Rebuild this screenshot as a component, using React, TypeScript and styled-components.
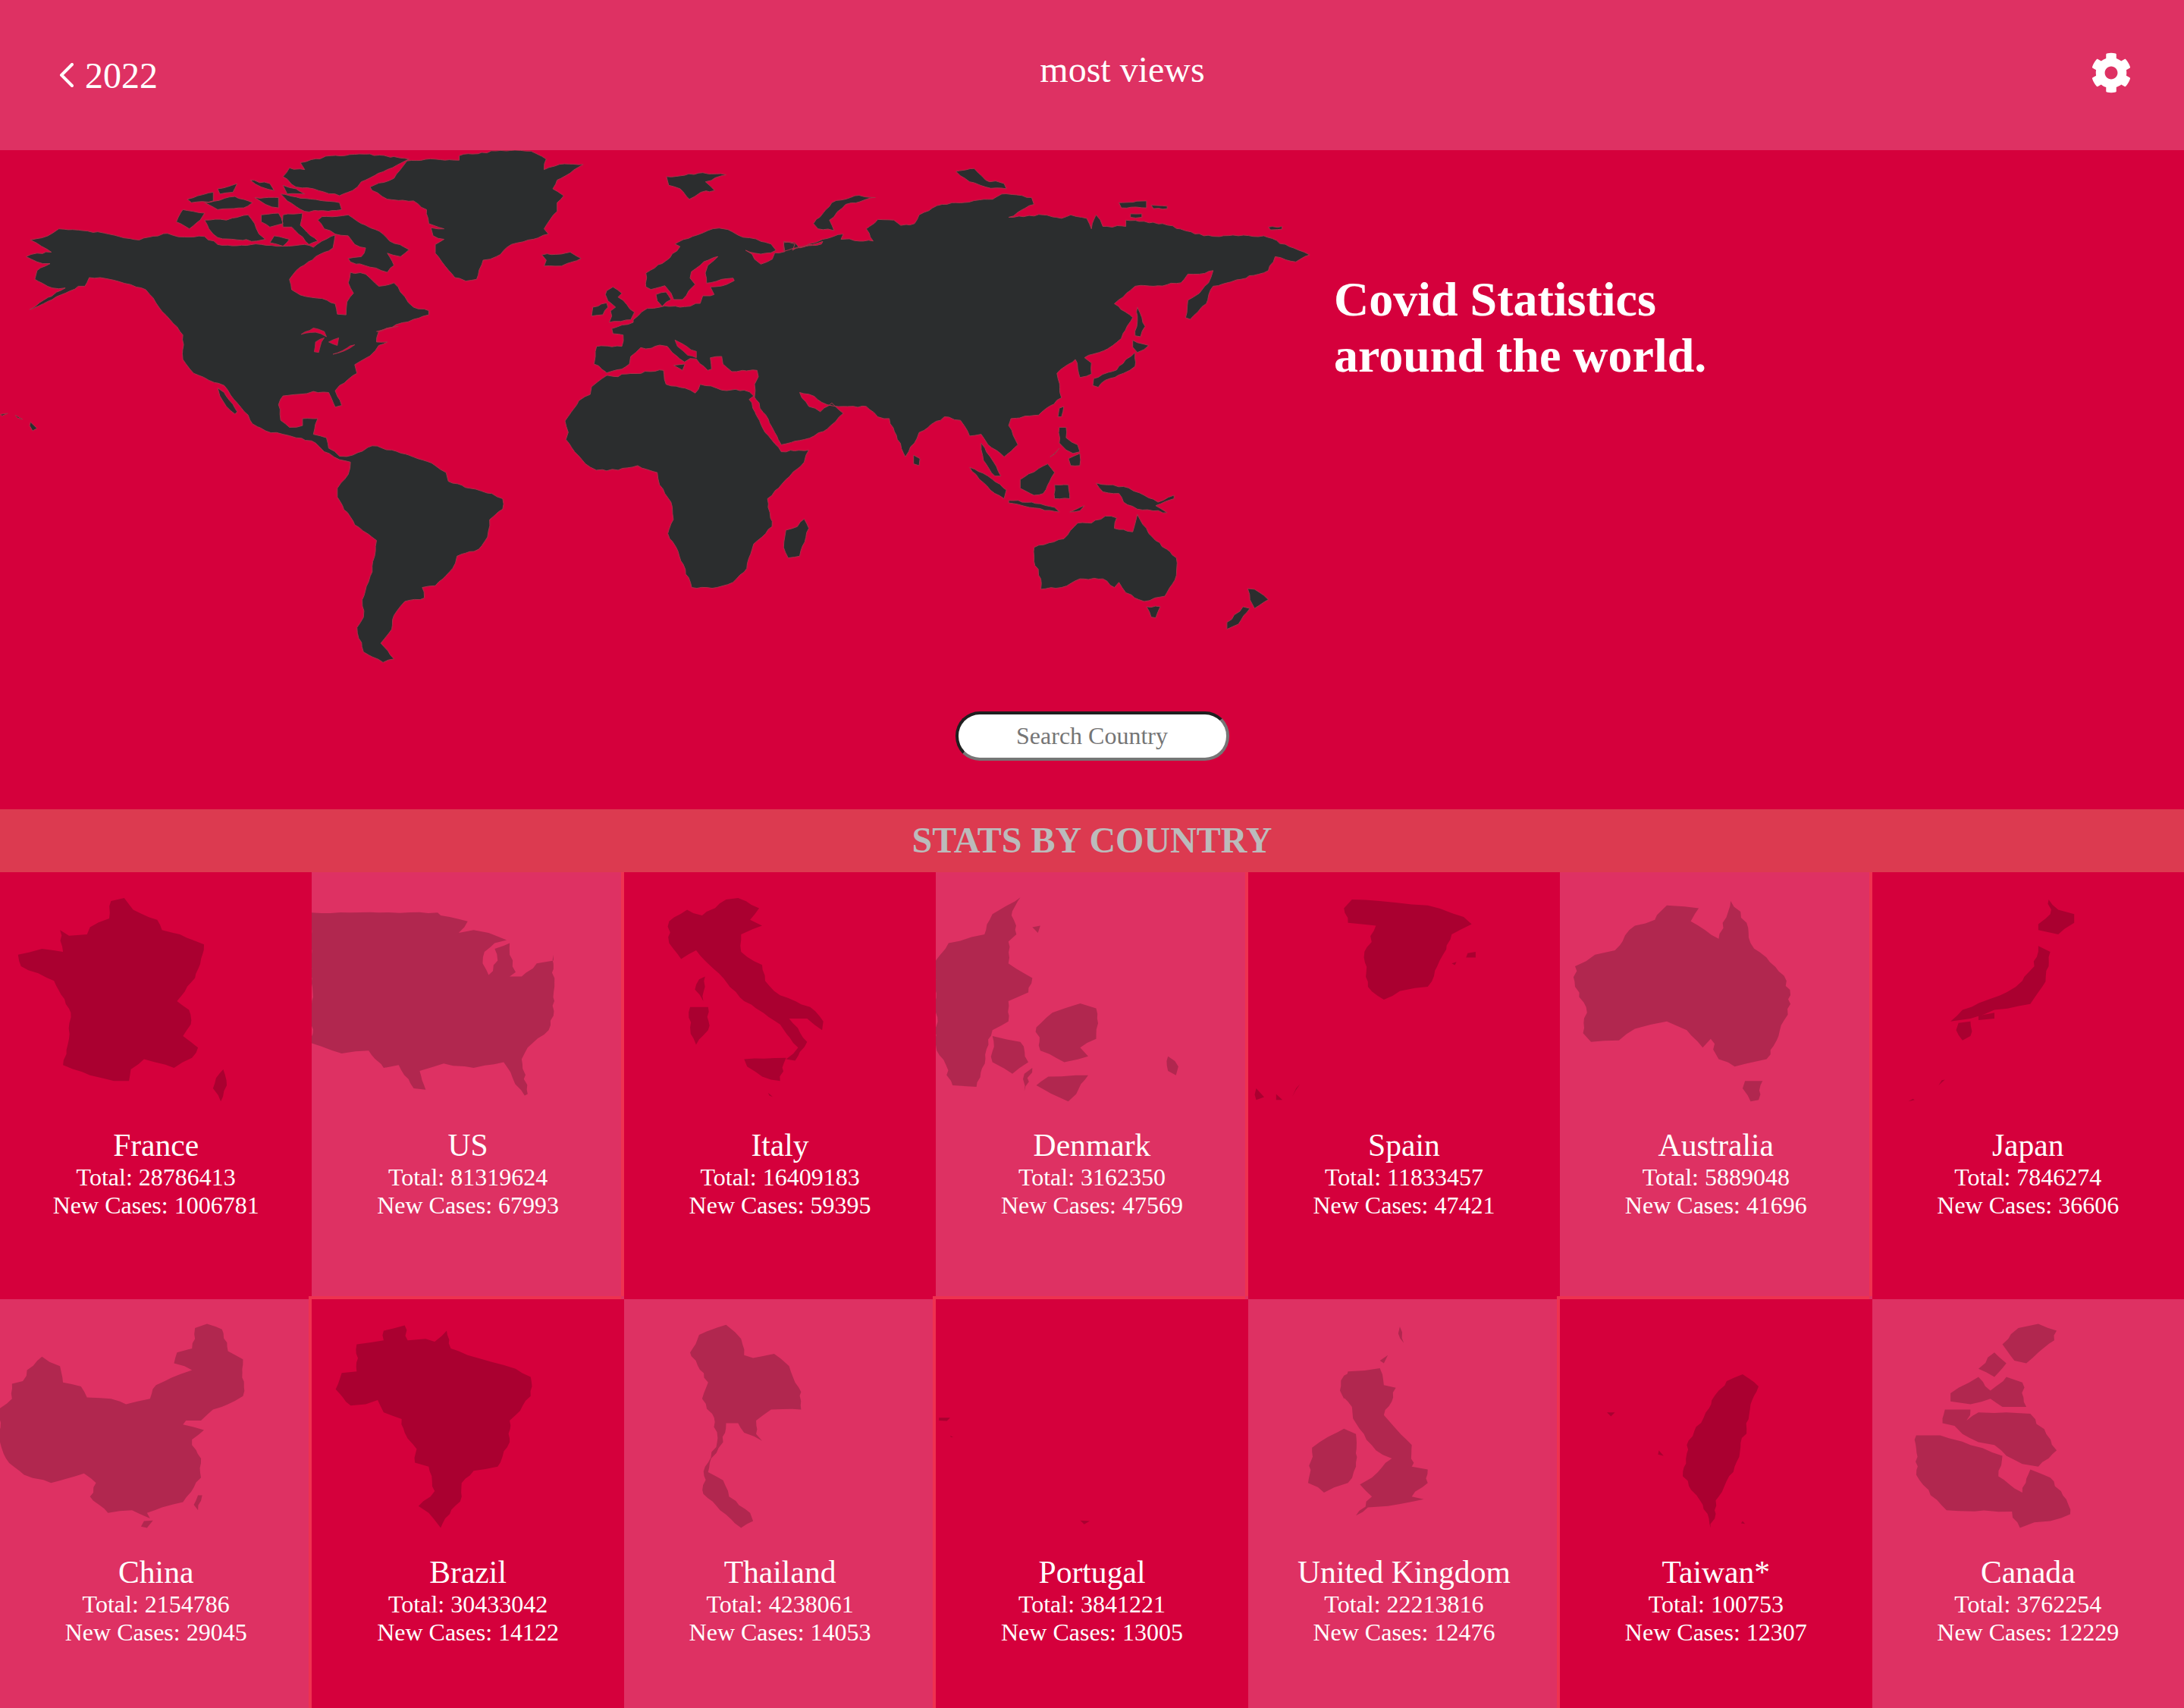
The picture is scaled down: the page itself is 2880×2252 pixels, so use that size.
import React from "react";
import styled, { createGlobalStyle } from "styled-components";
import { FaCog } from "react-icons/fa";

const GlobalStyle = createGlobalStyle`
  html, body { margin: 0; padding: 0; overflow: hidden; }
  body { font-family: "Liberation Serif", "Times New Roman", serif; color: #fff; background: #d5003c; }
`;

type Space = (x: number, y: number) => [number, number];
const A: Space = (x, y) => [x * 0.57398, 180 + y * 0.45918];
const B: Space = (x, y) => [800 + x * 0.60587, 180 + y * 0.45918];
const E: Space = (x, y) => [720 + x / 3, 280 + y / 3];

// deterministic wiggle so that long straight edges read as a coastline
const noise = (i: number) => {
  const v = Math.sin(i * 12.9898) * 43758.5453;
  return v - Math.floor(v) - 0.5;
};

const roughen = (pts: [number, number][], step: number, amp: number) => {
  const out: string[] = [];
  let seed = Math.round(pts[0][0] + pts[0][1]);
  pts.forEach((p, i) => {
    const q = pts[(i + 1) % pts.length];
    const dx = q[0] - p[0];
    const dy = q[1] - p[1];
    const n = Math.max(1, Math.floor(Math.hypot(dx, dy) / step));
    out.push(`${p[0].toFixed(1)} ${p[1].toFixed(1)}`);
    for (let k = 1; k < n; k++) {
      seed += 1;
      const t = k / n;
      const x = p[0] + dx * t + noise(seed) * amp;
      const y = p[1] + dy * t + noise(seed + 57) * amp;
      out.push(`${x.toFixed(1)} ${y.toFixed(1)}`);
    }
  });
  return "M" + out.join("L") + "Z";
};

const poly = (...segs: [Space, string][]) => {
  const pts: [number, number][] = [];
  segs.forEach(([sp, str]) => {
    str.trim().split(/\s+/).forEach((p) => {
      const [x, y] = p.split(",").map(Number);
      pts.push(sp(x, y));
    });
  });
  return roughen(pts, 6, 2.4);
};

const raw = (...strs: string[]) =>
  strs
    .map((s) =>
      roughen(
        s.trim().split(/\s+/).map((p) => {
          const [x, y] = p.split(",").map(Number);
          return [x, y] as [number, number];
        }),
        16,
        5
      )
    )
    .join("");

const LAND: string[] = [
  poly([A, `70,297 110,285 135,265 190,270 250,280 320,297 385,278 410,288 470,287 500,310 555,312 600,310 650,315 700,310 720,318 740,300 770,283 765,320 725,345 690,375 665,410 670,440 690,455 740,465 770,480 775,510 795,512 797,475 812,450 800,420 805,390 840,395 870,430 905,420 930,460 950,490 985,500 985,512 950,525 910,540 870,560 865,590 890,590 870,600 850,630 815,655 820,680 780,715 770,730 785,772 770,777 755,735 720,732 690,740 650,745 640,770 645,815 665,835 695,830 695,810 730,810 720,855 750,865 755,895 780,918 810,915 855,888 900,900 960,925 1000,945 1025,965 1030,990 1080,1010 1130,1025 1155,1040 1155,1070 1125,1100 1120,1150 1100,1185 1050,1205 1040,1240 1000,1290 970,1295 975,1325 930,1335 905,1375 900,1415 875,1455 905,1500 880,1510 835,1480 820,1410 835,1380 832,1330 855,1250 865,1160 815,1115 775,1035 775,1010 800,970 805,935 780,928 745,905 725,880 680,865 650,855 610,845 580,825 570,800 545,765 515,715 480,700 445,680 420,640 420,570 390,525 365,490 335,440 300,425 260,412 230,405 205,405 195,430 180,430 150,450 100,480 68,497 100,470 150,435 120,435 80,410 85,385 115,365 85,360 60,345 85,335 118,332 95,315`]),
  poly([A, `500,722 515,735 545,790 540,797 520,775 505,745`]),
  poly([A, `740,230 800,225 830,250 880,280 895,300 940,325 920,345 890,335 905,370 890,390 850,375 805,360 800,350 830,345 840,320 815,310 800,285 770,280 745,265 730,240`]),
  poly([A, `470,240 520,240 570,225 585,250 595,280 610,295 590,300 500,290 480,265`]),
  poly([A, `420,210 470,220 460,240 435,265 405,245`]),
  poly([A, `690,75 760,55 850,50 940,65 890,95 830,130 810,155 780,170 720,150 680,145 650,115 665,90 700,95`]),
  poly([A, `430,180 490,160 490,185 440,190`]),
  poly([A, `470,190 540,172 580,190 560,205 500,210`]),
  poly([A, `500,150 545,135 535,160 505,165`]),
  poly([A, `575,125 620,135 630,155 600,145`]),
  poly([A, `585,175 640,175 640,205 610,195`]),
  poly([A, `600,225 640,220 650,250 620,260 600,245`]),
  poly([A, `650,225 695,220 690,255 730,300 710,310 670,260 650,260`]),
  poly([A, `645,165 690,177 780,190 785,210 700,215 660,185`]),
  poly([A, `650,140 680,150 700,165 660,165`]),
  poly([A, `630,285 665,295 650,315 620,305`]),
  poly([A, `1055,55 1150,40 1220,42 1255,65 1250,95 1285,80 1340,80 1310,105 1280,125 1270,150 1295,170 1280,190 1280,215 1250,265 1260,280 1225,295 1175,310 1140,345 1110,355 1095,410 1070,415 1045,405 1000,335 1000,310 1020,295 995,285 990,262 1020,265 985,250 980,210 950,185 890,180 855,155 850,145 905,120 935,70 1000,65 1055,68`]),
  poly([A, `1245,340 1310,332 1335,350 1290,372 1250,372 1255,355`]),
  poly([A, `68,830 75,845 85,838 70,820`]),
  poly([A, `35,800 52,812 40,808`]),
  poly([A, `0,798 18,795 5,802`]),
  poly(
    [E, `240,645 205,670 180,690 175,720 130,745 100,790 75,825 88,870`],
    [A, `1300,870 1320,905 1345,940 1370,958 1420,958 1465,945 1510,965`],
    [B, `115,1000 140,1050 145,1100 133,1140 155,1190 185,1295 240,1295 275,1280 305,1240 320,1170 360,1120 350,1040 390,985 430,935 440,900 380,905 345,850 310,755 320,745 325,755 360,835 380,885 430,870 480,840 515,795 490,765 465,790 440,775 420,735 440,740 480,770 515,775 565,775 590,805 615,810 650,920 670,880 680,850 735,805 770,815 790,860 815,855 830,885 865,920 895,885 875,830 880,810 940,800 990,750 980,680 1020,640 1030,692 1055,682 1055,650 1040,635 1090,610 1120,580 1145,520 1105,480 1150,430 1190,430 1250,420 1265,395 1290,395 1320,385 1310,420 1290,450 1265,470 1260,520 1270,525 1305,480 1320,430 1380,410 1440,385 1455,345 1500,360 1530,340 1495,320 1430,285 1375,285 1300,285 1210,250 1130,240 1130,258 1080,258 1065,225 1055,265 1045,235 1010,225 990,235 950,225 875,232 930,195 925,175 860,165 840,180 730,195 680,225 670,250 640,255 625,240 590,238 565,265 580,300 510,295 515,280 470,295 420,320 410,305 385,305 385,330`],
    [E, `1095,115 1090,125 1000,135 975,150 985,125 940,115 945,155 905,160 895,185 850,205 825,185 815,165 790,150 850,165 890,160 910,150 890,125 830,105 760,90 720,68 685,62 640,72 580,95 510,125 530,135 490,180 430,220 395,240 395,295 415,305 470,290 495,320 505,345 540,345 565,310 590,285 570,260 575,235 625,195 680,175 640,210 630,240 635,280 695,265 740,260 745,270 715,285 650,295 665,325 650,330 620,330 610,360 530,375 470,370 450,375 400,380 345,425 345,435 260,460 265,480 305,485 300,530 200,530 195,570 190,600 235,630 240,635 300,620 330,600 335,570 375,535 395,540 450,525 480,530 500,555 548,592 570,578 595,580 640,625 655,620 650,575 695,570 700,600 735,630 835,625 840,650 825,680 825,730 805,710 750,700 715,705 610,680 590,715 550,695 475,680 465,625 300,640 285,650 245,645`]
  ),
  poly([E, `435,325 475,315 495,345 460,372 440,350`]),
  poly([E, `505,605 550,600 540,625`]),
  poly([E, `240,310 265,295 300,320 285,335 320,365 350,395 335,425 250,435 260,410 255,390 275,375 245,350 235,325`]),
  poly([E, `185,375 240,358 245,375 225,405 180,410`]),
  poly([B, `450,250 490,190 540,170 585,175 520,195 485,240 495,270 460,265`]),
  poly([B, `130,115 200,105 260,110 215,130 235,155 205,160 180,180 160,150 135,140`]),
  poly([B, `760,100 800,92 825,125 865,135 870,150 825,145 790,130`]),
  poly([B, `1115,190 1175,185 1175,205 1120,205`]),
  poly([B, `1185,197 1220,200 1220,207 1190,207`]),
  poly([B, `1140,222 1165,222 1165,232 1140,232`]),
  poly([B, `1440,260 1470,258 1470,266 1445,268`]),
  poly([B, `1155,490 1165,520 1172,545 1162,575 1150,572 1155,530`]),
  poly([B, `1145,585 1180,600 1155,620 1145,605`]),
  poly([B, `1150,620 1150,660 1125,680 1085,700 1070,720 1058,715 1060,695 1110,670 1130,640`]),
  poly([B, `985,780 995,775 990,805 982,805`]),
  poly([B, `985,835 1000,835 1000,865 1025,885 1030,905 1015,910 1000,900 985,880`]),
  poly([B, `965,920 985,895 975,912`]),
  poly([B, `1005,925 1030,910 1030,945 1010,945`]),
  poly([B, `900,985 960,940 975,965 950,1025 930,1030 900,1010`]),
  poly([B, `790,950 830,975 870,1015 865,1040 835,1015`]),
  poly([B, `875,1045 925,1050 975,1065 985,1078 920,1065 875,1052`]),
  poly([B, `815,880 835,920 858,975 845,975 820,930`]),
  poly([B, `975,1000 1005,1000 1008,1040 975,1040`]),
  poly([B, `1008,1078 1040,1060 1030,1075`]),
  poly([B, `1065,995 1090,1000 1125,1005 1170,1030 1200,1050 1235,1030 1235,1040 1195,1060 1220,1080 1190,1075 1155,1070 1125,1050 1115,1025 1080,1020`]),
  poly([B, `668,915 682,925 680,945 668,940`]),
  poly([B, `430,1098 440,1125 420,1205 395,1210 385,1180 390,1130 415,1120`]),
  poly([B, `930,1180 995,1155 1025,1110 1055,1110 1085,1090 1110,1095 1105,1125 1145,1135 1155,1085 1180,1140 1240,1210 1240,1260 1215,1320 1170,1335 1130,1310 1115,1280 1105,1295 1080,1270 1030,1270 990,1295 945,1300 945,1270 930,1220`]),
  poly([B, `1175,1350 1205,1350 1195,1382 1185,1380`]),
  poly([B, `1395,1298 1410,1300 1440,1330 1410,1355 1400,1330`]),
  poly([B, `1385,1350 1400,1355 1375,1400 1350,1415 1350,1395`]),
];
const WORLD = LAND.join("");
const SEAS = [
  poly([E, `510,505 540,520 595,550 595,575 560,565 520,530`]),
  poly([A, `692,568 720,550 745,560 750,575 725,562`]),
  poly([A, `725,590 745,578 732,620 722,618`]),
  poly([A, `755,590 778,578 775,600`]),
  poly([A, `765,625 815,598 790,616`]),
  poly([A, `865,560 915,545 880,555`]),
].join("");

type Country = { name: string; total: number; fresh: number; box: string; shape: string };

const COUNTRIES: Country[] = [
  { name: "France", total: 28786413, fresh: 1006781, box: "0 26 520 880",
    shape: raw(`185,125 207,115 222,155 262,190 270,225 300,240 340,275 325,390 295,470 315,500 318,550 305,590 330,630 320,665 290,700 240,670 218,705 215,745 190,745 150,725 105,690 115,600 118,510 90,400 35,350 30,310 70,290 105,300 100,225 115,245 145,240 150,215 182,185`, `372,705 378,760 368,815 355,770 360,735`) },
  { name: "US", total: 81319624, fresh: 67993, box: "520 26 520 880",
    shape: raw(`520,165 730,165 735,175 780,195 765,235 790,225 815,235 845,260 825,270 808,300 805,340 815,380 830,330 825,290 850,270 850,310 860,370 850,385 870,385 895,340 923,330 923,310 923,520 915,570 880,630 870,670 880,790 875,795 855,735 840,680 790,700 740,685 700,710 710,775 690,770 665,690 640,700 615,640 570,650 520,615`) },
  { name: "Italy", total: 16409183, fresh: 59395, box: "1040 26 520 880",
    shape: raw(`1115,195 1145,155 1170,175 1210,120 1230,115 1265,150 1250,190 1270,210 1235,240 1235,300 1270,345 1275,400 1300,450 1350,490 1372,540 1370,570 1345,530 1315,530 1345,610 1325,675 1310,670 1330,630 1300,550 1240,470 1190,360 1160,295 1135,325 1115,270`, `1150,490 1180,490 1180,570 1160,620 1150,560`, `1165,395 1175,385 1172,470 1158,430`, `1240,670 1310,665 1300,745 1270,730 1245,695`, `1280,785 1288,800 1282,795`) },
  { name: "Denmark", total: 3162350, fresh: 47569, box: "4 26 391 880",
    shape: raw(`110,113 100,160 105,240 95,265 95,340 125,390 120,440 95,470 95,540 75,570 70,620 55,765 25,760 4,620 4,330 20,270 65,240 75,170`, `75,590 110,610 120,680 100,720 75,680`, `130,560 150,510 185,478 205,495 205,600 185,630 195,660 165,680 135,640`, `145,730 195,725 180,790 170,815 130,760`, `125,215 135,210 132,235`, `295,660 308,695 305,725 295,710`, `115,720 125,700 115,780`) },
  { name: "Spain", total: 11833457, fresh: 47421, box: "395 26 391 880",
    shape: raw(`525,120 560,125 620,140 665,180 675,205 650,240 635,330 620,420 585,435 565,465 545,420 540,320 555,210 520,200 515,150`, `670,305 680,300 680,320 668,320`, `650,340 656,335 654,346`, `405,770 415,800 405,810`, `430,790 438,810 430,810`, `460,755 450,800 455,770`) },
  { name: "Australia", total: 5889048, fresh: 41696, box: "786 26 391 880",
    shape: raw(`805,350 830,310 855,295 880,210 905,190 920,140 960,150 950,195 985,255 990,200 1000,125 1020,200 1025,270 1045,320 1070,400 1075,480 1060,590 1045,670 1020,685 1005,695 985,670 975,600 965,630 945,570 920,540 880,565 860,605 825,610 815,580 820,510 805,420`, `1018,745 1040,745 1035,810 1025,815 1015,770`) },
  { name: "Japan", total: 7846274, fresh: 36606, box: "1177 26 391 880",
    shape: raw(`1398,120 1410,155 1430,170 1430,200 1410,240 1385,225 1385,205 1400,170`, `1385,280 1400,300 1398,350 1390,420 1375,480 1330,500 1300,530 1275,540 1290,500 1345,440 1365,400 1380,350`, `1285,545 1300,540 1300,590 1290,605 1282,570`, `1310,520 1330,510 1330,530 1310,535`, `1268,740 1260,760 1264,742`, `1230,810 1222,815 1228,806`) },
  { name: "China", total: 2154786, fresh: 29045, box: "0 64 520 940",
    shape: raw(`325,170 345,155 370,175 380,255 405,285 405,420 380,450 355,470 335,510 310,510 305,525 340,545 320,580 320,600 335,650 335,720 305,810 270,830 245,850 250,870 220,840 180,850 165,820 150,790 160,740 140,705 85,740 40,710 10,650 0,590 0,465 20,430 20,375 38,365 45,325 70,275 100,310 105,370 135,385 145,425 185,430 210,450 250,430 260,380 300,340 320,325 290,300 295,260 320,245 325,210`, `240,880 255,878 245,905 235,900`, `330,785 337,785 330,840 323,820`) },
  { name: "Brazil", total: 30433042, fresh: 14122, box: "520 64 520 940",
    shape: raw(`675,160 680,215 710,210 725,220 745,180 752,245 780,270 820,295 860,320 885,350 885,420 860,490 850,510 850,590 830,680 790,695 770,740 770,790 735,905 715,850 698,825 725,770 715,680 692,665 695,615 675,555 670,505 640,480 630,435 610,450 585,455 560,395 570,335 595,330 595,230 640,215 640,180`) },
  { name: "Thailand", total: 4238061, fresh: 14053, box: "1040 64 520 940",
    shape: raw(`1210,158 1225,185 1235,210 1240,270 1255,280 1290,265 1315,310 1325,370 1335,405 1335,470 1285,470 1260,510 1260,560 1270,585 1240,555 1230,520 1210,520 1205,590 1185,650 1180,700 1205,730 1215,790 1250,850 1255,880 1235,905 1200,840 1172,780 1175,680 1195,590 1190,500 1170,430 1180,370 1150,260 1165,195`) },
  { name: "Portugal", total: 3841221, fresh: 13005, box: "4 64 391 940",
    shape: raw(`8,500 22,500 18,512 8,510`, `185,878 197,880 190,892`, `22,567 26,570 23,572`) },
  { name: "United Kingdom", total: 22213816, fresh: 12476, box: "395 64 391 940",
    shape: raw(`520,330 560,318 565,380 580,390 575,440 565,490 580,540 600,600 600,680 620,690 620,740 600,790 615,800 570,825 545,830 530,860 550,790 535,745 550,720 575,650 555,620 540,560 530,520 525,460 510,400`, `495,570 515,540 530,560 530,680 520,740 490,775 470,740 475,610`, `585,165 590,225 583,190`, `560,290 570,270 565,300`, `515,345 525,330 515,430 510,400`) },
  { name: "Taiwan*", total: 100753, fresh: 12307, box: "786 64 391 940",
    shape: raw(`1015,340 1035,385 1025,450 1020,540 1005,680 985,790 975,905 965,820 940,715 945,600 985,400 995,365`, `845,480 855,480 850,495`, `910,620 916,640 909,635`, `1015,880 1018,890 1013,888`) },
  { name: "Canada", total: 3762254, fresh: 12229, box: "1177 64 391 940",
    shape: raw(`1360,170 1385,155 1408,180 1405,215 1385,260 1370,300 1355,290 1345,250 1340,230`, `1330,260 1345,300 1330,350 1310,320`, `1285,390 1310,350 1325,400 1345,350 1365,370 1370,460 1340,460 1325,430 1300,450 1275,440 1275,410`, `1268,470 1300,470 1295,510 1310,480 1345,480 1375,485 1395,560 1408,620 1385,680 1365,670 1345,640 1330,600 1310,590 1290,560 1280,530 1265,520`, `1232,565 1262,565 1300,600 1340,640 1335,715 1365,775 1375,690 1400,720 1420,800 1425,855 1400,880 1380,885 1362,905 1352,845 1270,840 1250,785 1232,710`) },
];

const Page = styled.div`
  width: 2880px;
  height: 2252px;
  overflow: hidden;
  background: #d5003c;
`;

const Header = styled.header`
  height: 198px;
  box-sizing: border-box;
  padding: 0 70px 0 79px;
  display: flex;
  align-items: center;
  justify-content: space-between;
  background: #de3163;
`;

const BackLink = styled.div`
  display: flex;
  align-items: center;
  gap: 15px;
  font-size: 48px;
`;

const Title = styled.div`
  font-size: 48px;
  margin: 0 5px 16px 0;
`;

const Gear = styled(FaCog)`
  width: 54px;
  height: 54px;
  margin: -7px -1px 0 0;
  color: #fff;
  display: block;
`;

const Hero = styled.section`
  height: 869px;
  background: #d5003c;
  display: flex;
  flex-direction: column;
`;

const HeroTop = styled.div`
  display: flex;
  height: 682px;
  margin-bottom: 58px;
`;

const WorldMap = styled.svg`
  width: 1730px;
  height: 682px;
  flex: none;
  display: block;
`;

const Heading = styled.h1`
  margin: 160px 0 0 29px;
  font-size: 64px;
  font-weight: 700;
  line-height: 73.5px;
`;

const SearchRow = styled.div`
  display: flex;
  justify-content: center;
`;

const Search = styled.input`
  width: 361px;
  height: 65px;
  box-sizing: border-box;
  border-width: 4px;
  border-style: solid;
  border-color: #1f1f1f #767676 #767676 #1f1f1f;
  border-radius: 32px;
  background: #fff;
  text-align: center;
  font-family: inherit;
  font-size: 32px;
  outline: none;
  &::placeholder { color: #757575; opacity: 1; }
`;

const Band = styled.h2`
  position: relative;
  z-index: 1;
  margin: 0;
  height: 83px;
  line-height: 81px;
  text-align: center;
  font-size: 48px;
  font-weight: 700;
  color: #bbb;
  background: #dc3a50;
`;

const Grid = styled.div`
  display: grid;
  grid-template-columns: repeat(7, 1fr);
  grid-auto-rows: 563px;
`;

const Card = styled.article<{ $light: boolean }>`
  background: ${(p) => (p.$light ? "#de3163" : "#d5003c")};
  box-shadow: ${(p) => (p.$light ? "none" : "-4px -4px 0 #ee3250")};
  text-align: center;
  display: flex;
  flex-direction: column;
  min-width: 0;
`;

const Shape = styled.svg`
  width: 100%;
  height: 337px;
  display: block;
  flex: none;
`;

const Name = styled.div`
  font-size: 41.6px;
  line-height: 47px;
`;

const Line = styled.div`
  font-size: 32px;
  line-height: 37px;
`;

export default function App() {
  return (
    <Page>
      <GlobalStyle />
      <Header>
        <BackLink>
          <svg width="18" height="32" viewBox="0 0 18 32" fill="none" stroke="#fff" strokeWidth="4" strokeLinecap="round" strokeLinejoin="miter">
            <path d="M16 2 L2 16 L16 30" />
          </svg>
          <span>2022</span>
        </BackLink>
        <Title>most views</Title>
        <Gear />
      </Header>
      <Hero>
        <HeroTop>
          <WorldMap viewBox="0 198 1730 682" aria-hidden="true">
            <path d={WORLD} fill="#2b2d2e" stroke="#a8324a" strokeWidth="1" strokeLinejoin="round" />
            <path d={SEAS} fill="#d5003c" stroke="#a8324a" strokeWidth="0.8" strokeLinejoin="round" />
          </WorldMap>
          <Heading>
            Covid Statistics
            <br />
            around the world.
          </Heading>
        </HeroTop>
        <SearchRow>
          <Search placeholder="Search Country" />
        </SearchRow>
      </Hero>
      <Band>STATS BY COUNTRY</Band>
      <Grid>
        {COUNTRIES.map((c, i) => (
          <Card key={c.name} $light={i % 2 === 1}>
            <Shape viewBox={c.box} preserveAspectRatio="none" aria-hidden="true">
              <path d={c.shape} fill="#000" fillOpacity="0.2" />
            </Shape>
            <Name>{c.name}</Name>
            <Line>Total: {c.total}</Line>
            <Line>New Cases: {c.fresh}</Line>
          </Card>
        ))}
      </Grid>
    </Page>
  );
}
